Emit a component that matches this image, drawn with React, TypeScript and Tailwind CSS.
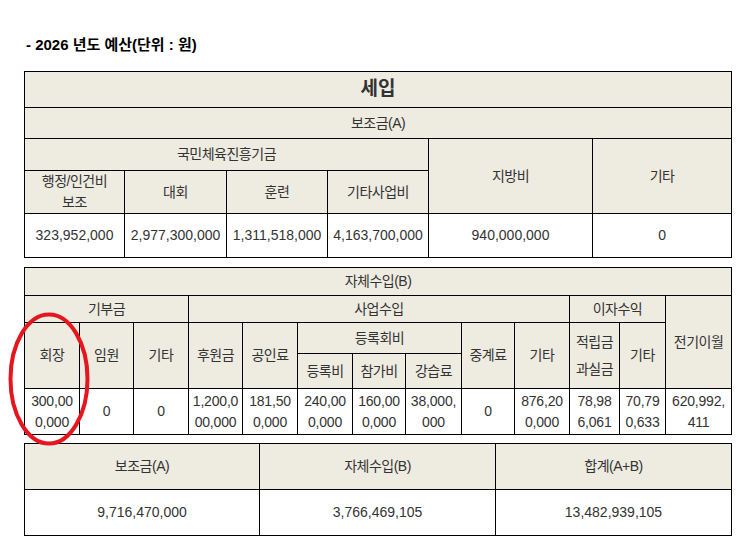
import React from 'react';

const font = 'font-["Liberation_Sans","Noto_Sans_CJK_KR",sans-serif]';
const cellHead = 'border border-black bg-[#eeebe1] text-center align-middle text-[#333]';
const hd = `${cellHead} font-normal tracking-[-0.5px]`;
const td = 'border border-black bg-white text-center align-middle text-[#333]';

function Lines({ lines }: { lines: string[] }) {
  return (
    <div className="leading-[21px]">
      {lines.map((l) => (
        <div key={l}>{l}</div>
      ))}
    </div>
  );
}

export default function App() {
  const selfData: string[][] = [
    ['300,00', '0,000'],
    ['0'],
    ['0'],
    ['1,200,0', '00,000'],
    ['181,50', '0,000'],
    ['240,00', '0,000'],
    ['160,00', '0,000'],
    ['38,000,', '000'],
    ['0'],
    ['876,20', '0,000'],
    ['78,98', '6,061'],
    ['70,79', '0,633'],
    ['620,992,', '411'],
  ];

  return (
    <div className={`relative min-h-[543px] w-[749px] bg-white pl-[24px] pt-[35px] text-[14px] ${font}`}>
      <h2 className="pl-[2px] text-[15px] font-bold leading-[20px] text-black">- 2026 년도 예산(단위 : 원)</h2>

      {/* 보조금 */}
      <table className="mt-[16px] w-[707px] table-fixed border-collapse border border-black">
        <colgroup>
          <col className="w-[100px]" />
          <col className="w-[102px]" />
          <col className="w-[101px]" />
          <col className="w-[101px]" />
          <col className="w-[164px]" />
          <col className="w-[139px]" />
        </colgroup>
        <tbody>
          <tr className="h-[36px]">
            <th colSpan={6} className={`${cellHead} text-[19px] font-bold text-[#222]`}>
              세입
            </th>
          </tr>
          <tr className="h-[31px]">
            <th colSpan={6} className={hd}>보조금(A)</th>
          </tr>
          <tr className="h-[32px]">
            <th colSpan={4} className={hd}>국민체육진흥기금</th>
            <th rowSpan={2} className={hd}>지방비</th>
            <th rowSpan={2} className={hd}>기타</th>
          </tr>
          <tr className="h-[43px]">
            <th className={hd}>
              <Lines lines={['행정/인건비', '보조']} />
            </th>
            <th className={hd}>대회</th>
            <th className={hd}>훈련</th>
            <th className={hd}>기타사업비</th>
          </tr>
          <tr className="h-[44px]">
            <td className={td}>323,952,000</td>
            <td className={td}>2,977,300,000</td>
            <td className={td}>1,311,518,000</td>
            <td className={td}>4,163,700,000</td>
            <td className={td}>940,000,000</td>
            <td className={td}>0</td>
          </tr>
        </tbody>
      </table>

      {/* 자체수입 */}
      <table className="mt-[9px] w-[707px] table-fixed border-collapse border border-black">
        <colgroup>
          <col className="w-[55px]" />
          <col className="w-[54px]" />
          <col className="w-[55px]" />
          <col className="w-[54px]" />
          <col className="w-[55px]" />
          <col className="w-[55px]" />
          <col className="w-[53px]" />
          <col className="w-[56px]" />
          <col className="w-[53px]" />
          <col className="w-[55px]" />
          <col className="w-[50px]" />
          <col className="w-[46px]" />
          <col className="w-[66px]" />
        </colgroup>
        <tbody>
          <tr className="h-[28px]">
            <th colSpan={13} className={hd}>자체수입(B)</th>
          </tr>
          <tr className="h-[27px]">
            <th colSpan={3} className={hd}>기부금</th>
            <th colSpan={7} className={hd}>사업수입</th>
            <th colSpan={2} className={hd}>이자수익</th>
            <th rowSpan={3} className={hd}>전기이월</th>
          </tr>
          <tr className="h-[31px]">
            <th rowSpan={2} className={hd}>회장</th>
            <th rowSpan={2} className={hd}>임원</th>
            <th rowSpan={2} className={hd}>기타</th>
            <th rowSpan={2} className={hd}>후원금</th>
            <th rowSpan={2} className={hd}>공인료</th>
            <th colSpan={3} className={hd}>등록회비</th>
            <th rowSpan={2} className={hd}>중계료</th>
            <th rowSpan={2} className={hd}>기타</th>
            <th rowSpan={2} className={hd}>
              <div className="leading-[27px]">
                <div>적립금</div>
                <div>과실금</div>
              </div>
            </th>
            <th rowSpan={2} className={hd}>기타</th>
          </tr>
          <tr className="h-[35px]">
            <th className={hd}>등록비</th>
            <th className={hd}>참가비</th>
            <th className={hd}>강습료</th>
          </tr>
          <tr className="h-[46px]">
            {selfData.map((lines, i) => (
              <td key={i} className={`${td} tracking-[-0.2px]`}>
                <Lines lines={lines} />
              </td>
            ))}
          </tr>
        </tbody>
      </table>

      {/* 합계 */}
      <table className="mt-[8px] w-[707px] table-fixed border-collapse border border-black">
        <colgroup>
          <col className="w-[235px]" />
          <col className="w-[236px]" />
          <col className="w-[236px]" />
        </colgroup>
        <tbody>
          <tr className="h-[46px]">
            <th className={`${hd} bg-[#d7d4cb]`}>보조금(A)</th>
            <th className={`${hd} bg-[#d7d4cb]`}>자체수입(B)</th>
            <th className={`${hd} bg-[#d7d4cb]`}>합계(A+B)</th>
          </tr>
          <tr className="h-[46px]">
            <td className={td}>9,716,470,000</td>
            <td className={td}>3,766,469,105</td>
            <td className={td}>13,482,939,105</td>
          </tr>
        </tbody>
      </table>

      {/* hand-drawn highlight */}
      <svg
        className="pointer-events-none absolute left-[7px] top-[312px]"
        width="84"
        height="134"
        viewBox="0 0 84 134"
        fill="none"
      >
        <ellipse cx="42" cy="67" rx="38.5" ry="64.5" stroke="#e5161f" strokeWidth="4" />
      </svg>
    </div>
  );
}
